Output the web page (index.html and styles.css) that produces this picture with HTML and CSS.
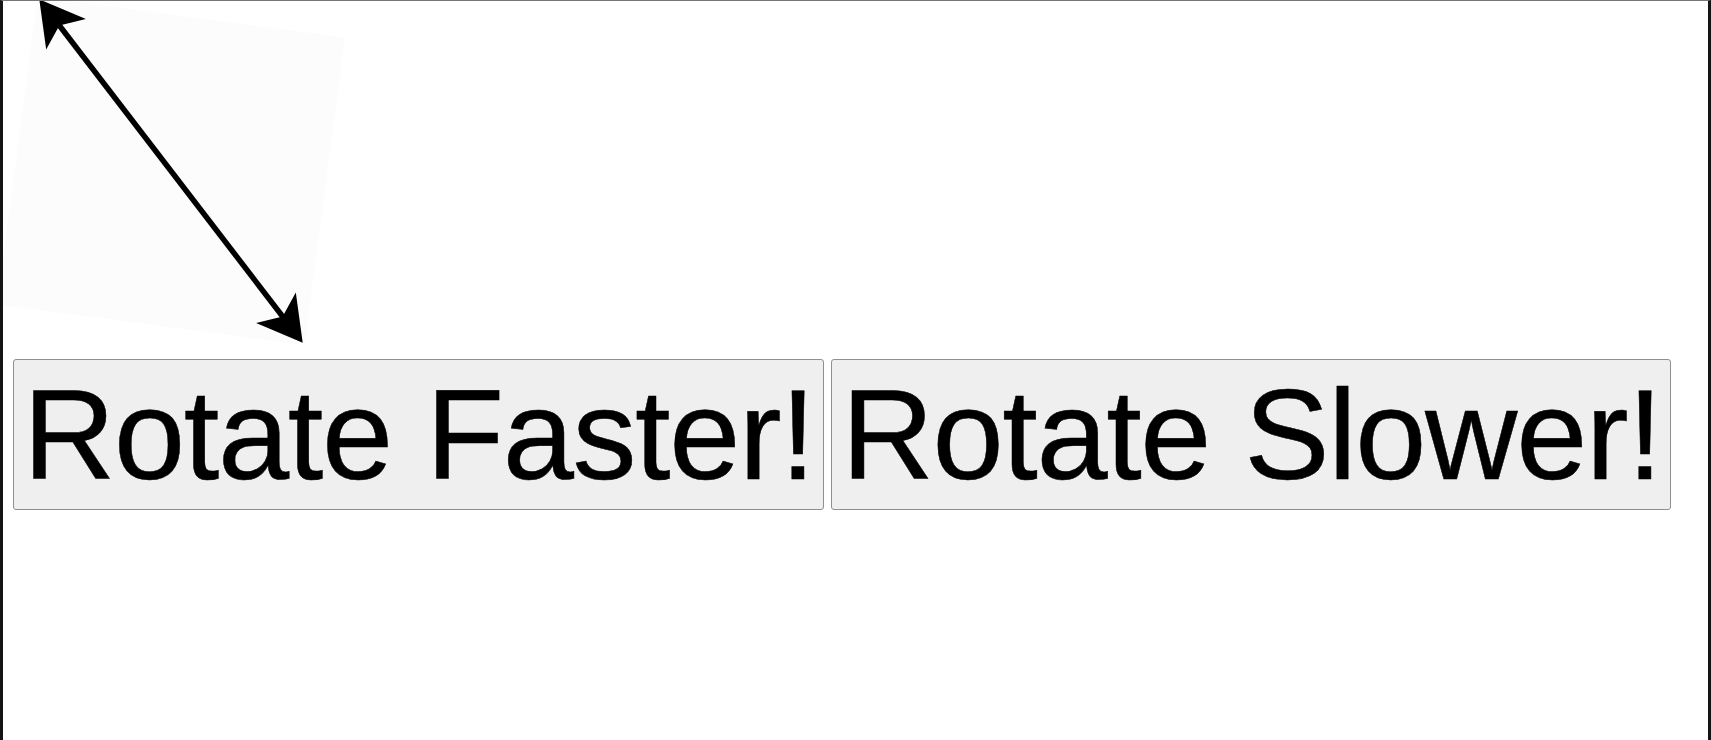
FILE: index.html
```html
<!DOCTYPE html>
<html lang="en">
<head>
<meta charset="utf-8">
<title>Rotate</title>
<link rel="stylesheet" href="styles.css">
</head>
<body>
<div class="frame">
  <div class="spinner">
    <svg class="arrow" viewBox="0 0 310 310" width="310" height="310" aria-hidden="true">
      <line x1="22" y1="22" x2="288" y2="288" stroke="#000" stroke-width="5.5"/>
      <polygon points="2,2 50.8,15.4 25.3,25.3 15.4,50.8" fill="#000"/>
      <polygon points="308,308 259.2,294.6 284.7,284.7 294.6,259.2" fill="#000"/>
    </svg>
  </div>
  <div class="controls">
    <button class="btn" type="button">Rotate Faster!</button>
    <button class="btn" type="button">Rotate Slower!</button>
  </div>
</div>
</body>
</html>
```
FILE: styles.css
```css
html, body {
  margin: 0;
  padding: 0;
  background: #fff;
}

.frame {
  box-sizing: border-box;
  width: 1711px;
  height: 740px;
  border-left: 3px solid #141414;
  border-right: 3px solid #141414;
  border-top: 1px solid #777;
  overflow: hidden;
  display: flex;
  flex-direction: column;
  align-items: flex-start;
}

.spinner {
  width: 310px;
  height: 310px;
  margin: 14.5px 0 0 12.5px;
  background: #fcfcfc;
  transform: rotate(7.5deg);
  flex: none;
}

.arrow {
  display: block;
}

.controls {
  display: flex;
  gap: 7px;
  margin: 33.5px 0 0 10px;
  align-items: flex-start;
}

.btn {
  font-family: "Liberation Sans", Arial, sans-serif;
  font-size: 128px;
  letter-spacing: -1.4px;
  -webkit-text-stroke: 0.5px #000;
  line-height: normal;
  color: #000;
  background: #efefef;
  border: 1px solid #8f8f8f;
  border-radius: 3px;
  padding: 1px 9px;
  margin: 0;
  white-space: nowrap;
}
```
